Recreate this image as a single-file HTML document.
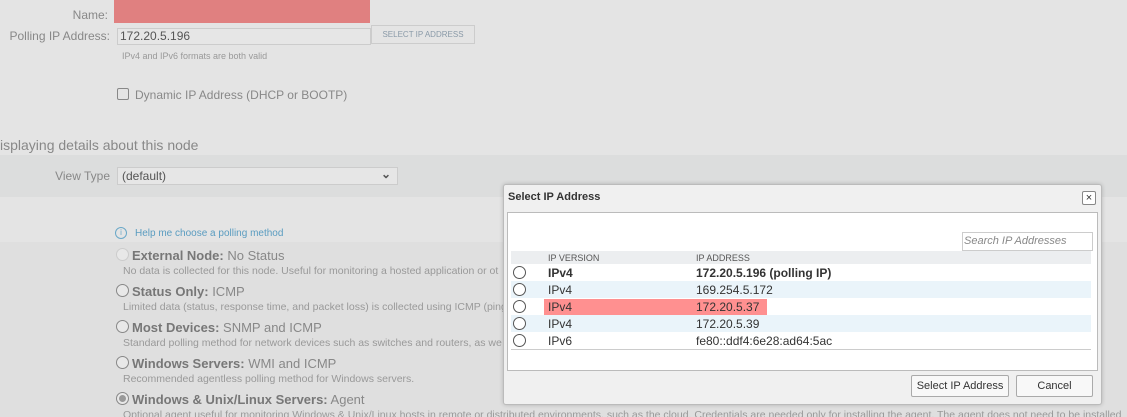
<!DOCTYPE html>
<html><head><style>
html,body{margin:0;width:1127px;height:417px;overflow:hidden}
body{background:#e4e4e4;font-family:"Liberation Sans",sans-serif;position:relative;color:#777}
.a{position:absolute;white-space:nowrap}
.lbl{font-size:12px;color:#888;text-align:right}
.radio{position:absolute;width:11px;height:11px;border:1px solid #888;border-radius:50%;background:#e8e8e8}
.t{font-size:13px;color:#888}
.t b{color:#777}
.d{font-size:10.5px;color:#999}
.row{position:absolute;left:511px;width:580px;height:17px;font-size:12px;color:#333}
.row span{position:absolute;top:2px}
.rr{position:absolute;left:2px;top:2px;width:11px;height:11px;border:1px solid #555;border-radius:50%;background:#fff}
</style></head><body>
<div class="a" style="left:0;top:155px;width:1127px;height:42px;background:#dcdddd"></div>
<div class="a" style="left:0;top:242px;width:1127px;height:175px;background:#dfdfdf"></div>
<div class="a lbl" style="left:0;top:8px;width:108px">Name:</div>
<div class="a" style="left:114px;top:0;width:256px;height:23px;background:#e08080"></div>
<div class="a lbl" style="left:0;top:29px;width:110px">Polling IP Address:</div>
<div class="a" style="left:117px;top:28px;width:250px;height:15px;border:1px solid #ccc;background:#e6e6e6;font-size:12px;color:#555;padding-left:2px;line-height:15px">172.20.5.196</div>
<div class="a" style="left:371px;top:25px;width:102px;height:17px;border:1px solid #ccc;font-size:8px;color:#8a9aa8;text-align:center;line-height:17px">SELECT IP ADDRESS</div>
<div class="a" style="left:122px;top:51px;font-size:9px;color:#999">IPv4 and IPv6 formats are both valid</div>
<div class="a" style="left:117px;top:88px;width:10px;height:10px;border:1px solid #888;border-radius:2px"></div>
<div class="a" style="left:135px;top:88px;font-size:12px;color:#888">Dynamic IP Address (DHCP or BOOTP)</div>
<div class="a" style="left:0;top:137px;font-size:14px;color:#888">isplaying details about this node</div>
<div class="a lbl" style="left:0;top:169px;width:110px">View Type</div>
<div class="a" style="left:117px;top:167px;width:275px;height:16px;border:1px solid #ccc;background:#e6e6e6;font-size:12px;color:#555;padding-left:4px;line-height:16px">(default)<span style="position:absolute;right:6px;top:-2px;font-size:12px;font-weight:bold">&#8964;</span></div>
<div class="a" style="left:115px;top:227px;width:10px;height:10px;border:1px solid #6aa8c8;border-radius:50%;font-size:8px;color:#6aa8c8;text-align:center;line-height:10px">i</div>
<div class="a" style="left:135px;top:228px;font-size:10px;color:#5a9cc0">Help me choose a polling method</div>

<div class="radio" style="left:116px;top:248px;border-color:#ccc"></div>
<div class="a t" style="left:132px;top:248px"><b>External Node:</b> No Status</div>
<div class="a d" style="left:123px;top:265px">No data is collected for this node. Useful for monitoring a hosted application or ot</div>
<div class="radio" style="left:116px;top:284px"></div>
<div class="a t" style="left:132px;top:284px"><b>Status Only:</b> ICMP</div>
<div class="a d" style="left:123px;top:301px">Limited data (status, response time, and packet loss) is collected using ICMP (ping)</div>
<div class="radio" style="left:116px;top:320px"></div>
<div class="a t" style="left:132px;top:320px"><b>Most Devices:</b> SNMP and ICMP</div>
<div class="a d" style="left:123px;top:337px">Standard polling method for network devices such as switches and routers, as we</div>
<div class="radio" style="left:116px;top:356px"></div>
<div class="a t" style="left:132px;top:356px"><b>Windows Servers:</b> WMI and ICMP</div>
<div class="a d" style="left:123px;top:373px">Recommended agentless polling method for Windows servers.</div>
<div class="radio" style="left:116px;top:392px"><div style="margin:2px;width:7px;height:7px;border-radius:50%;background:#999"></div></div>
<div class="a t" style="left:132px;top:392px"><b>Windows &amp; Unix/Linux Servers:</b> Agent</div>
<div class="a d" style="left:123px;top:409px">Optional agent useful for monitoring Windows &amp; Unix/Linux hosts in remote or distributed environments, such as the cloud. Credentials are needed only for installing the agent. The agent does not need to be installed</div>

<div class="a" style="left:503px;top:184px;width:597px;height:219px;background:#f0f0f0;border:1px solid #bbb;border-radius:3px;box-shadow:0 0 4px rgba(0,0,0,.2)"></div>
<div class="a" style="left:508px;top:191px;font-size:11px;font-weight:bold;color:#333">Select IP Address</div>
<div class="a" style="left:1082px;top:191px;width:12px;height:12px;border:1px solid #888;border-radius:2px;background:#fff;font-size:11px;line-height:12px;text-align:center;color:#333">×</div>
<div class="a" style="left:507px;top:212px;width:589px;height:157px;background:#fff;border:1px solid #bbb"></div>
<div class="a" style="left:962px;top:232px;width:128px;height:17px;border:1px solid #ccc;background:#fff;font-size:11px;font-style:italic;color:#888;line-height:17px;padding-left:1px">Search IP Addresses</div>
<div class="row" style="top:251px;height:13px;background:#eceef0;font-size:9px;color:#555"><span style="left:37px;top:2px">IP VERSION</span><span style="left:185px;top:2px">IP ADDRESS</span></div>
<div class="row" style="top:264px;font-weight:bold"><div class="rr"></div><span style="left:37px">IPv4</span><span style="left:185px">172.20.5.196 (polling IP)</span></div>
<div class="row" style="top:281px;background:#eaf4fa"><div class="rr"></div><span style="left:37px">IPv4</span><span style="left:185px">169.254.5.172</span></div>
<div class="row" style="top:298px"><div class="rr"></div><div style="position:absolute;left:33px;top:1px;width:223px;height:16px;background:#ff9090"></div><span style="left:37px">IPv4</span><span style="left:185px">172.20.5.37</span></div>
<div class="row" style="top:315px;background:#eaf4fa"><div class="rr"></div><span style="left:37px">IPv4</span><span style="left:185px">172.20.5.39</span></div>
<div class="row" style="top:332px;border-bottom:1px solid #ccc"><div class="rr"></div><span style="left:37px">IPv6</span><span style="left:185px">fe80::ddf4:6e28:ad64:5ac</span></div>
<div class="a" style="left:911px;top:375px;width:96px;height:20px;border:1px solid #aaa;border-radius:2px;background:#f8f8f8;font-size:11px;color:#333;text-align:center;line-height:20px">Select IP Address</div>
<div class="a" style="left:1016px;top:375px;width:75px;height:20px;border:1px solid #aaa;border-radius:2px;background:#f8f8f8;font-size:11px;color:#333;text-align:center;line-height:20px">Cancel</div>
</body></html>
